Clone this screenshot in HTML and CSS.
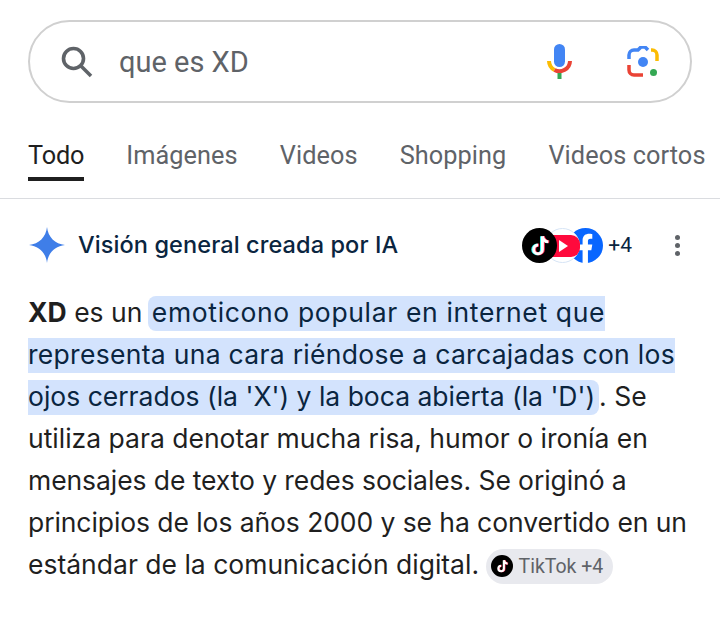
FILE: index.html
```html
<!DOCTYPE html>
<html>
<head>
    <title>que es XD</title>
    <link rel="stylesheet" href="styles.css">
</head>
<body>
    <div class="search-box">
        <svg class="search-icon" viewBox="0 0 36 36" width="36" height="36">
            <circle cx="14.500" cy="14.500" r="10" fill="none" stroke="#5f6368" stroke-width="3.600"/>
            <path d="M22 22L32 32" fill="none" stroke="#5f6368" stroke-width="3.600"/>
        </svg>
        <span class="search-text">que es XD</span>
        <svg class="mic-icon" viewBox="0 0 25 35" width="25" height="35">
            <rect x="7" y="0" width="11" height="23" rx="5.500" fill="#4285f4"/>
            <path d="M2 17A10.500 10.500 0 0 0 7.500 26" fill="none" stroke="#fbbc04" stroke-width="4"/>
            <path d="M7.500 26A10.500 10.500 0 0 0 23 17" fill="none" stroke="#ea4335" stroke-width="4"/>
            <rect x="10.500" y="29" width="4" height="6" fill="#34a853"/>
        </svg>
        <svg class="lens-icon" viewBox="0 0 32 32" width="32" height="32">
            <path d="M2 13V9A5 5 0 0 1 7 4H11L14 1H18L21 4" fill="none" stroke="#4285f4" stroke-width="3.500"/>
            <path d="M24 4H25A5 5 0 0 1 30 9V15" fill="none" stroke="#fbbc04" stroke-width="3.500"/>
            <path d="M2 19V24A5 5 0 0 0 7 29H16" fill="none" stroke="#ea4335" stroke-width="3.500"/>
            <circle cx="16" cy="16" r="5" fill="#4285f4"/>
            <circle cx="26.500" cy="26.500" r="3.500" fill="#34a853"/>
        </svg>
    </div>

    <nav class="tabs">
        <a class="tab active">Todo</a>
        <a class="tab">Imágenes</a>
        <a class="tab">Videos</a>
        <a class="tab">Shopping</a>
        <a class="tab">Videos cortos</a>
    </nav>

    <div class="overview">
        <div class="overview-head">
            <svg class="spark" viewBox="0 0 36 36" width="36" height="36">
                <path d="M18 0C19 10 26 17 36 18C26 19 19 26 18 36C17 26 10 19 0 18C10 17 17 10 18 0Z" fill="#3f7ee8"/>
            </svg>
            <span class="overview-title">Visión general creada por IA</span>
            <div class="sources">
                <span class="source source-tt">
                    <svg viewBox="0 0 36 36" width="35" height="35">
                        <circle cx="18" cy="18" r="18" fill="#000"/>
                        <path d="M21 8V21.500A4.500 4.500 0 1 1 16.500 17M21 8C21.500 11.500 24 13.500 27 13.800" fill="none" stroke="#25f4ee" stroke-width="3" transform="translate(-1 0.500)"/>
                        <path d="M21 8V21.500A4.500 4.500 0 1 1 16.500 17M21 8C21.500 11.500 24 13.500 27 13.800" fill="none" stroke="#fe2c55" stroke-width="3" transform="translate(1 0.500)"/>
                        <path d="M21 8V21.500A4.500 4.500 0 1 1 16.500 17M21 8C21.500 11.500 24 13.500 27 13.800" fill="none" stroke="#fff" stroke-width="3" transform="translate(0 0.500)"/>
                    </svg>
                </span>
                <span class="source source-yt">
                    <svg viewBox="0 0 35 35" width="35" height="35">
                        <circle cx="17.500" cy="17.500" r="17" fill="#fff" stroke="#d6e4f5"/>
                        <path d="M0 7H26A9 9 0 0 1 35 16V20A9 9 0 0 1 26 29H0Z" fill="#ff0a3c"/>
                        <path d="M14 12L23 18L14 24Z" fill="#fff"/>
                    </svg>
                </span>
                <span class="source source-fb">
                    <svg viewBox="0 0 36 36" width="35" height="35">
                        <circle cx="18" cy="18" r="18" fill="#0866ff"/>
                        <path d="M15 36V23H11V17H15V13C15 8 18 6 22 6C23.500 6 25 6.300 25 6.300V11H23C21 11 20.500 12 20.500 13.500V17H25L24 23H20.500V36Z" fill="#fff"/>
                    </svg>
                </span>
                <span class="source-count">+4</span>
            </div>
            <div class="more">
                <i></i><i></i><i></i>
            </div>
        </div>

        <p class="answer"><b>XD</b> es un <span class="mark"><span class="fit-a">emoticono popular en internet que</span><br><span class="fit-b">representa una cara riéndose a carcajadas con los</span><br>ojos cerrados (la 'X') y la boca abierta (la 'D')</span>. Se<br>utiliza para denotar mucha risa, humor o ironía en<br><span class="fit-c">mensajes de texto y redes sociales. Se originó a</span><br><span class="fit-c">principios de los años 2000 y se ha convertido en un</span><br>estándar de la comunicación digital. <span class="chip"><svg viewBox="0 0 36 36" width="22" height="22">
            <circle cx="18" cy="18" r="18" fill="#000"/>
            <path d="M21 8V21.500A4.500 4.500 0 1 1 16.500 17M21 8C21.500 11.500 24 13.500 27 13.800" fill="none" stroke="#fe2c55" stroke-width="3.500" transform="translate(1 0.500)"/>
            <path d="M21 8V21.500A4.500 4.500 0 1 1 16.500 17M21 8C21.500 11.500 24 13.500 27 13.800" fill="none" stroke="#fff" stroke-width="3.500" transform="translate(0 0.500)"/>
        </svg>TikTok +4</span></p>
    </div>
</body>
</html>
```

FILE: styles.css
```css
html, body {
    margin: 0;
    padding: 0;
}
body {
    width: 720px;
    height: 619px;
    overflow: hidden;
    background-color: #fff;
    font-family: Roboto, "Noto Sans", sans-serif;
    padding-top: 20px;
    box-sizing: border-box;
}
.search-box {
    display: flex;
    align-items: center;
    box-sizing: border-box;
    width: 664px;
    height: 83px;
    margin-left: 28px;
    border: 2px solid #d0d0d0;
    border-radius: 42px;
    padding: 0 31px 0 29px;
}
.search-icon {
    flex: none;
}
.search-text {
    margin-left: 24px;
    font-size: 29px;
    color: #5f6368;
    flex: 1;
}
.mic-icon {
    margin-right: 55px;
}
.tabs {
    display: flex;
    gap: 42px;
    height: 96px;
    box-sizing: border-box;
    padding: 36px 0 0 28px;
    border-bottom: 1px solid #dadce0;
    white-space: nowrap;
}
.tab {
    font-size: 25.3px;
    letter-spacing: 0.08px;
    line-height: 34px;
    color: #5f6368;
    height: 38px;
}
.tab.active {
    color: #1f1f1f;
    letter-spacing: -0.2px;
    border-bottom: 4px solid #1f1f1f;
}
.overview {
    padding: 0 28px;
}
.overview-head {
    display: flex;
    align-items: center;
    height: 92px;
    margin-left: 1px;
}
.spark {
    flex: none;
}
.overview-title {
    margin-left: 13px;
    margin-bottom: 2px;
    font-family: Inter, sans-serif;
    font-size: 23.5px;
    font-weight: 450;
    letter-spacing: 0.1px;
    color: #0a2540;
    flex: 1;
}
.sources {
    display: flex;
    align-items: center;
}
.source {
    display: block;
    width: 35px;
    height: 35px;
}
.source svg {
    display: block;
}
.source-tt {
    position: relative;
    z-index: 3;
}
.source-yt {
    margin-left: -12px;
    position: relative;
    z-index: 2;
}
.source-fb {
    margin-left: -12px;
    position: relative;
    z-index: 1;
}
.source-count {
    margin-left: 5px;
    font-size: 21px;
    color: #0a2540;
}
.more {
    display: flex;
    flex-direction: column;
    gap: 3px;
    margin: 0 12px 0 43px;
}
.more i {
    display: block;
    width: 5px;
    height: 5px;
    border-radius: 50%;
    background-color: #5f6368;
}
.answer {
    margin: 0;
    font-family: Inter, sans-serif;
    font-size: 26.5px;
    line-height: 42px;
    color: #1f1f1f;
    white-space: nowrap;
}
.answer b {
    font-weight: 700;
}
.mark {
    background-color: #d3e3fd;
    color: #0a2540;
    padding: 0 4px 3px;
    margin-left: -2px;
    border-radius: 8px;
}
.fit-a {
    letter-spacing: 0.65px;
}
.fit-b {
    letter-spacing: 0.3px;
}
.fit-c {
    letter-spacing: -0.08px;
}
.chip {
    display: inline-flex;
    align-items: center;
    gap: 6px;
    height: 35px;
    padding: 0 10px 0 5px;
    margin-left: -1px;
    border-radius: 18px;
    background-color: #e8e9ee;
    color: #5f6368;
    font-family: Roboto, sans-serif;
    font-size: 19.5px;
    line-height: 35px;
    vertical-align: -3px;
}
```
